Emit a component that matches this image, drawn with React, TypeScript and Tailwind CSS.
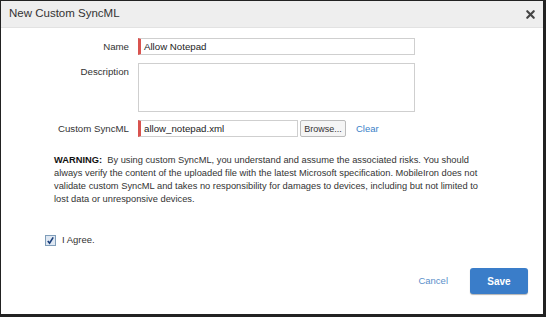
import { X } from "lucide-react"

export default function App() {
  return (
    <div className="h-[317px] w-[546px] bg-white font-['Liberation_Sans',Arial,sans-serif] text-[#333]">
      <div className="flex h-full w-full flex-col border-l border-t border-[#222] border-r-[3px] border-b-[3px]">
        <div className="flex h-[27px] items-center justify-between bg-[#eeeeee] pl-[8px] pr-[6px] border-b border-[#e2e2e2]">
          <span className="text-[11.5px] text-[#333]">New Custom SyncML</span>
          <X className="h-[13px] w-[13px] text-[#444]" strokeWidth={4} />
        </div>

        <div className="flex flex-1 flex-col">
          <div className="mt-[10px] grid grid-cols-[137px_1fr] gap-y-[8px] text-[9.7px] leading-[14px]">
            <label className="pr-[9px] pt-[2px] text-right">Name</label>
            <div className="flex h-[17px] w-[277px] items-center border border-[#cfcfcf] border-l-[3px] border-l-[#d9534f] pl-[3px] text-[9.7px] text-[#222]">
              Allow Notepad
            </div>

            <label className="pr-[9px] pt-[2px] text-right">Description</label>
            <div className="h-[49px] w-[277px] border border-[#cfcfcf]" />

            <label className="pr-[9px] pt-[2px] text-right">Custom SyncML</label>
            <div className="flex items-center">
              <div className="flex h-[17px] w-[160px] items-center border border-[#cfcfcf] border-l-[3px] border-l-[#d9534f] pl-[3px] text-[9.7px] text-[#222]">
                allow_notepad.xml
              </div>
              <button className="ml-[2px] h-[17px] w-[46px] rounded-[2px] border border-[#bbb] bg-[#f5f5f5] text-[9px] text-[#333]">
                Browse...
              </button>
              <span className="ml-[10px] text-[9.5px] text-[#3a7fc8]">Clear</span>
            </div>
          </div>

          <p className="ml-[53px] mt-[17px] whitespace-nowrap text-[9.3px] leading-[13px] text-[#333]">
            <b className="text-[#111]">WARNING:</b>&nbsp; By using custom SyncML, you understand and assume the associated risks. You should
            <br />
            always verify the content of the uploaded file with the latest Microsoft specification. MobileIron does not
            <br />
            validate custom SyncML and takes no responsibility for damages to devices, including but not limited to
            <br />
            lost data or unresponsive devices.
          </p>

          <div className="ml-[44px] mt-[27px] flex items-center">
            <span className="flex h-[11px] w-[11px] items-center justify-center border border-[#7f9db9] bg-[#dfe8f3]">
              <svg viewBox="0 0 10 10" className="h-[9px] w-[9px]">
                <path d="M2 5.5 L4 8 L8 1.5" fill="none" stroke="#1a3e7a" strokeWidth="1.8" />
              </svg>
            </span>
            <span className="ml-[6px] text-[9.5px]">I Agree.</span>
          </div>

          <div className="mt-auto mb-[20px] flex items-center justify-end pr-[15px]">
            <span className="mr-[22px] text-[9.5px] text-[#5b8fca]">Cancel</span>
            <button className="h-[26px] w-[58px] rounded-[3px] bg-[#3a7dc9] text-[10px] font-bold text-white shadow-[0_1px_1px_rgba(0,0,0,0.3)]">
              Save
            </button>
          </div>
        </div>
      </div>
    </div>
  )
}
